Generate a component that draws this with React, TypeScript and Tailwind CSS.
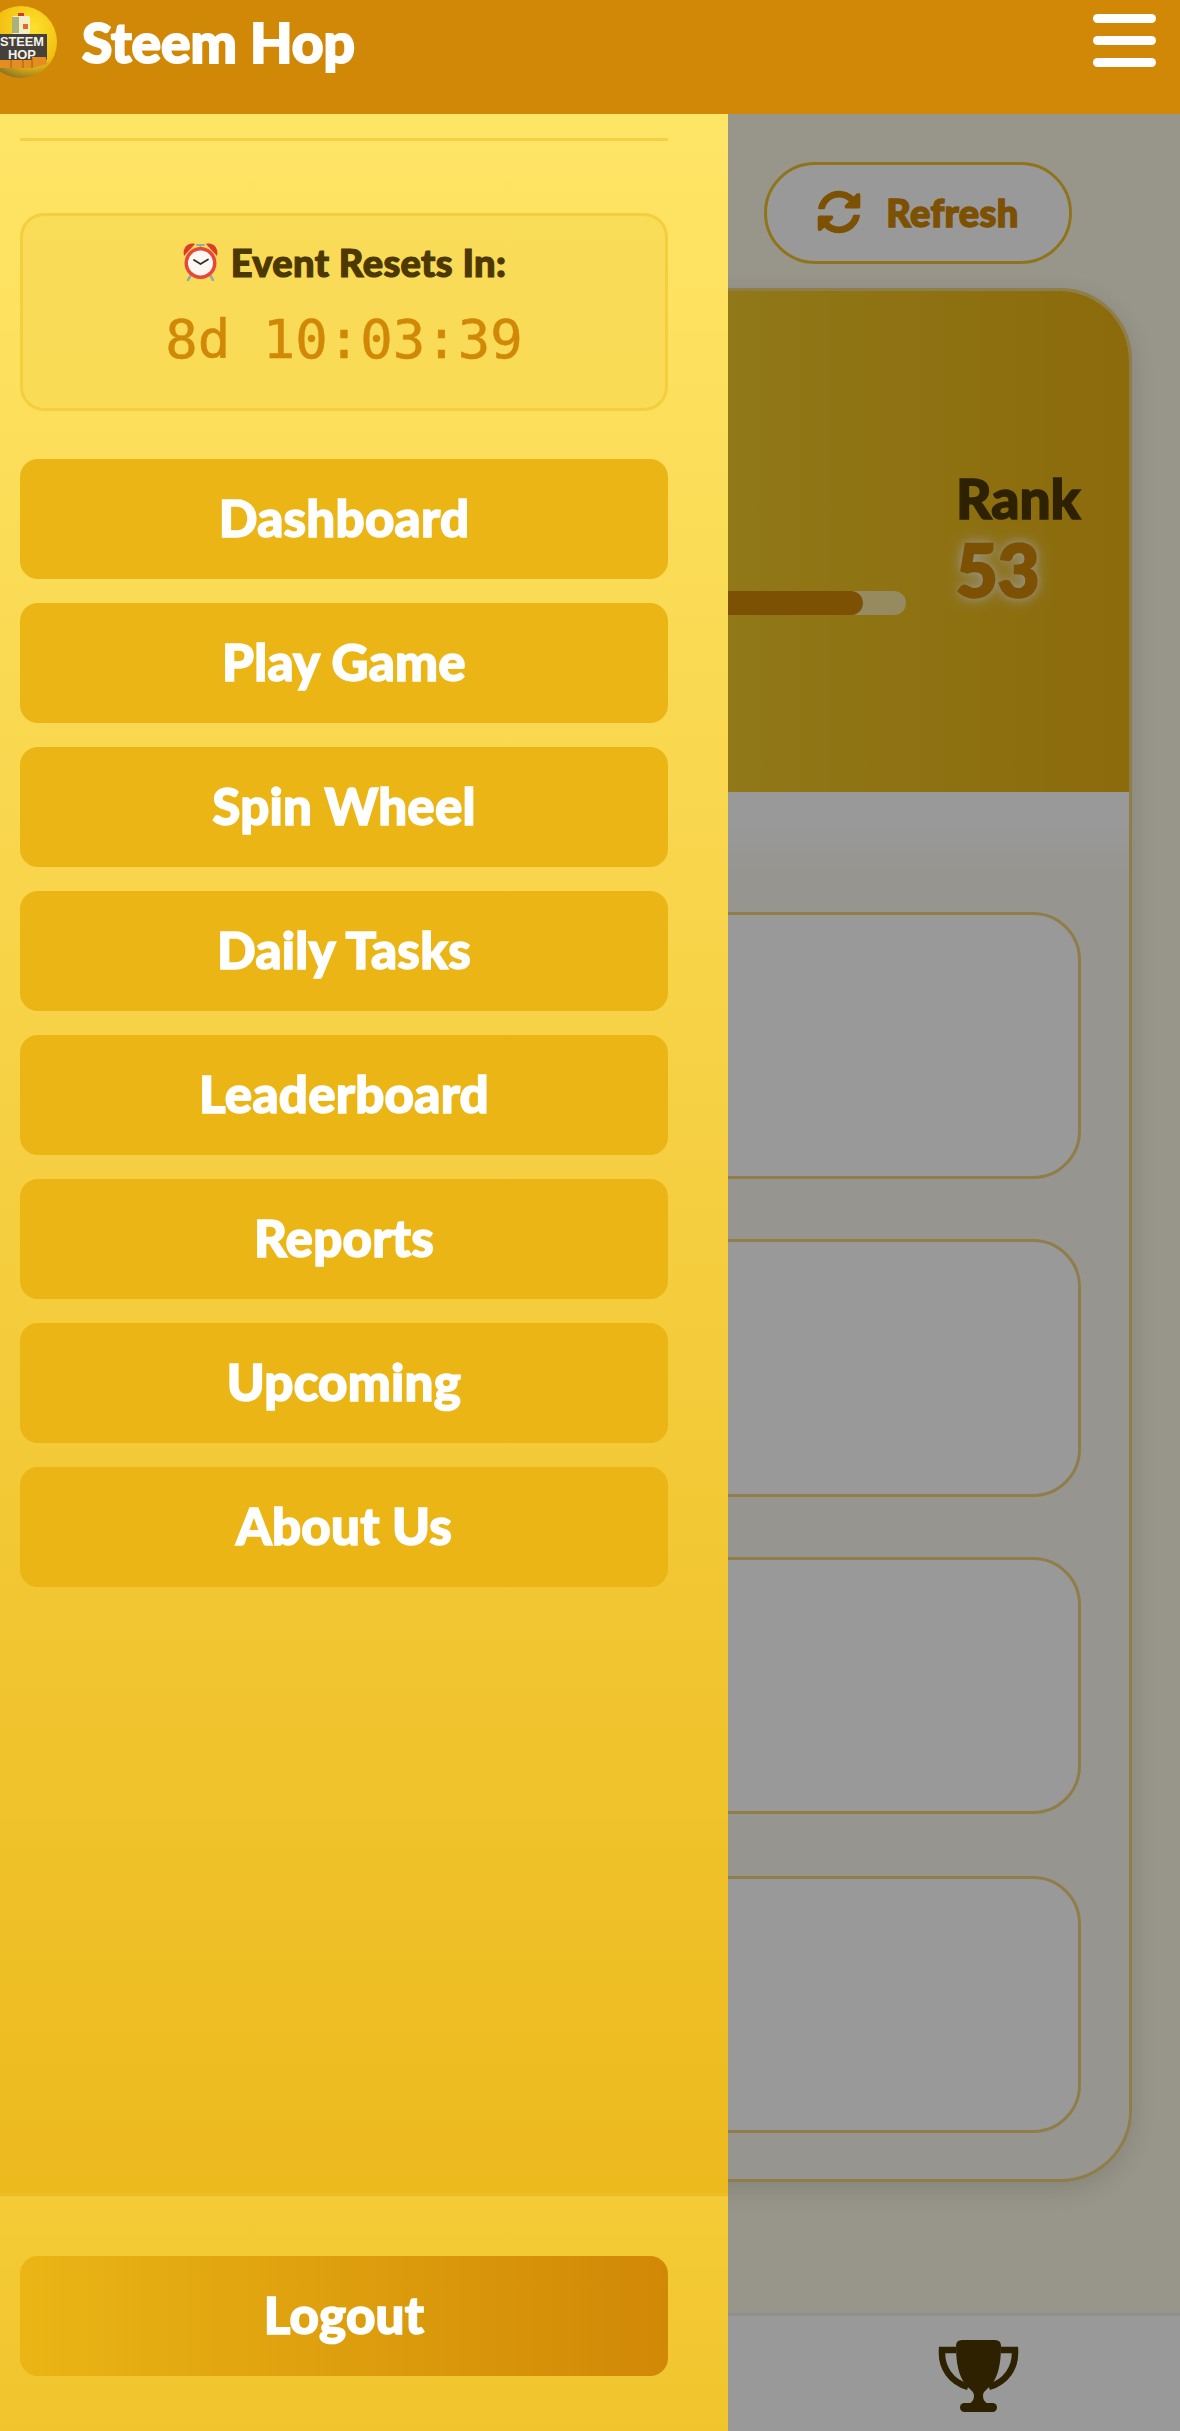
import React from "react";
import { FaSyncAlt } from "react-icons/fa";

const menuItems = [
  "Dashboard",
  "Play Game",
  "Spin Wheel",
  "Daily Tasks",
  "Leaderboard",
  "Reports",
  "Upcoming",
  "About Us",
];

const taskCards = [
  "h-[267px]",
  "h-[258px] mt-[60px]",
  "h-[257px] mt-[60px]",
  "h-[257px] mt-[62px]",
];

const Logo = () => (
  <svg width="72" height="72" viewBox="0 0 72 72" className="-ml-[15px] shrink-0">
    <defs>
      <radialGradient id="ball" cx="0.65" cy="0.3" r="0.85">
        <stop offset="0" stopColor="#ffe02e" />
        <stop offset="0.6" stopColor="#f0bd10" />
        <stop offset="1" stopColor="#5f5230" />
      </radialGradient>
    </defs>
    <circle cx="36" cy="36" r="36" fill="url(#ball)" />
    {/* chicken */}
    <rect x="33" y="7" width="6" height="4" fill="#c8402a" />
    <rect x="27" y="10" width="18" height="18" rx="2" fill="#f4edc6" />
    <rect x="27" y="11" width="7" height="16" fill="#a9b27a" />
    <rect x="38" y="18" width="5" height="5" fill="#d8702a" />
    {/* sign */}
    <rect x="15" y="28" width="47" height="26" fill="#44403a" />
    <text x="37" y="40" textAnchor="middle" textLength="44" lengthAdjust="spacingAndGlyphs" fontFamily="Liberation Sans, sans-serif" fontWeight="700" fontSize="12" fill="#f4f1e8">STEEM</text>
    <text x="37" y="53" textAnchor="middle" textLength="28" lengthAdjust="spacingAndGlyphs" fontFamily="Liberation Sans, sans-serif" fontWeight="700" fontSize="12" fill="#f4f1e8">HOP</text>
    {/* bricks */}
    <path d="M15 54 H47 V51 H61 L62 58 L47 62 H15 Z" fill="#e48d20" />
    <path d="M26 54 V62 M38 54 V62 M47 52 V62" stroke="#a85c10" strokeWidth="1" />
  </svg>
);

const AlarmClock = () => (
  <svg width="37" height="40" viewBox="0 0 37 40" className="shrink-0">
    <path d="M2 14 C0 6 6 0 13 2 Z" fill="#dd3a2a" />
    <path d="M35 14 C37 6 31 0 24 2 Z" fill="#dd3a2a" />
    <path d="M18.5 3 V7 M15 3 H22" stroke="#8fb0a8" strokeWidth="2" strokeLinecap="round" />
    <path d="M9 33 L6 38 M28 33 L31 38" stroke="#8fb0a8" strokeWidth="2.5" strokeLinecap="round" />
    <circle cx="18.5" cy="21" r="16" fill="#e9463a" />
    <circle cx="18.5" cy="21" r="12.5" fill="#fbf8f4" />
    <path d="M18.5 22 L12 18 M18.5 22 L26 17.5" stroke="#3a2a28" strokeWidth="1.8" strokeLinecap="round" />
  </svg>
);

const Trophy = () => (
  <svg width="81" height="72" viewBox="0 0 81 72" className="shrink-0">
    <path d="M18 10 H4 C3 28 13 42 30 47" fill="none" stroke="#4d3800" strokeWidth="6.5" />
    <path d="M63 10 H77 C78 28 68 42 51 47" fill="none" stroke="#4d3800" strokeWidth="6.5" />
    <path d="M24 0 H57 Q63 0 63 6 C63 24 60 36 54 44 C49 50 45 51 45 56 C45 60 47 62 50 64 H31 C34 62 36 60 36 56 C36 51 32 50 27 44 C21 36 18 24 18 6 Q18 0 24 0 Z" fill="#4d3800" />
    <rect x="22" y="63" width="37" height="9" rx="4.5" fill="#4d3800" />
  </svg>
);

export default function App() {
  return (
    <div className="relative flex h-[2431px] w-[1180px] flex-col overflow-hidden bg-[#fefae6] font-['Lato',sans-serif]">
      <header className="relative z-30 flex h-[114px] shrink-0 items-start justify-between bg-[#d18806] pt-[6px]">
        <div className="flex items-center gap-[25px]">
          <Logo />
          <h1 className="text-[55px] leading-[72px] font-black text-white [-webkit-text-stroke-width:2px]">Steem Hop</h1>
        </div>
        <div className="mt-[8px] mr-[24px] flex w-[63px] flex-col gap-[13px]">
          <span className="h-[9px] rounded-full bg-white" />
          <span className="h-[9px] rounded-full bg-white" />
          <span className="h-[9px] rounded-full bg-white" />
        </div>
      </header>

      <main className="flex-1 pt-[48px]">
        <div className="flex justify-end pr-[108px]">
          <button className="flex h-[102px] w-[308px] items-center justify-center gap-[25px] rounded-full border-[3px] border-[#eec22e] bg-white pb-[2px] text-[38px] font-black tracking-[0.01em] text-[#d18806] [-webkit-text-stroke-width:1.5px]">
            <FaSyncAlt className="h-[44px] w-[44px]" />
            Refresh
          </button>
        </div>

        <section className="mx-[48px] mt-[24px] h-[1894px] overflow-hidden rounded-[72px] border-[3px] border-[#eed27a] bg-[#faf8f0] shadow-[0_8px_30px_rgba(0,0,0,0.12)]">
          <div className="flex h-[501px] items-start justify-end bg-[linear-gradient(90deg,#f2c828_63%,#e8b214_100%)] pt-[176px] pr-[49px]">
            <div className="mt-[124px] mr-[50px] h-[24px] w-[300px] overflow-hidden rounded-full bg-[#fbe6a0]">
              <div className="h-full w-[257px] rounded-full bg-[#d18806]" />
            </div>
            <div className="flex w-[124px] flex-col">
              <span className="text-[55px] leading-[62px] font-black text-[#4d3800] [-webkit-text-stroke-width:1.5px]">Rank</span>
              <span className="mt-[2px] text-[72px] leading-[76px] font-black text-[#d18806] [-webkit-text-stroke-width:2.5px] [text-shadow:0_0_10px_#ffffff,0_0_18px_rgba(255,255,255,0.8)]">53</span>
            </div>
          </div>
          <div className="bg-[linear-gradient(180deg,#ffffff_30px,#faf8f0_90px)] px-[48px] pt-[120px]">
            {taskCards.map((size, index) => (
              <div key={index} className={`${size} rounded-[48px] border-[3px] border-[#eed27a] bg-white`} />
            ))}
          </div>
        </section>
      </main>

      <nav className="flex h-[118px] shrink-0 items-start justify-end border-t-[3px] border-[#eeeeee] bg-white pt-[24px] pr-[161px]">
        <Trophy />
      </nav>

      <div className="absolute inset-x-0 top-[114px] bottom-0 z-10 bg-black/40" />

      <aside className="absolute top-[114px] bottom-0 left-0 z-20 flex w-[728px] flex-col bg-[linear-gradient(180deg,#ffe566_0%,#eab515_100%)]">
        <div className="flex-1 pt-[24px] pr-[60px] pl-[20px]">
          <div className="h-[3px] bg-[#f5d042]" />
          <div className="mt-[72px] flex h-[198px] flex-col items-center rounded-[24px] border-[3px] border-[#f3cf3f] bg-[#f8da55]/80 pt-[24px]">
            <div className="flex items-center gap-[12px] text-[38px] leading-[44px] font-black tracking-[0.01em] text-[#4d3800] [-webkit-text-stroke-width:1.2px]">
              <AlarmClock />
              Event Resets In:
            </div>
            <div className="mt-[24px] font-['DejaVu_Sans_Mono',monospace] text-[54px] leading-[64px] text-[#d18806] [-webkit-text-stroke-width:0.5px]">8d 10:03:39</div>
          </div>
          <div className="mt-[48px] flex flex-col gap-[24px]">
            {menuItems.map((item) => (
              <button key={item} className="h-[120px] rounded-[18px] bg-[#eab515] pb-[2px] text-[51px] font-black tracking-[0.005em] text-white [-webkit-text-stroke-width:1.5px]">
                {item}
              </button>
            ))}
          </div>
        </div>
        <div className="h-[238px] shrink-0 border-t-[3px] border-[#ecbd22] bg-[linear-gradient(180deg,#f4cb36,#f1c42d)] pt-[60px] pr-[60px] pl-[20px]">
          <button className="h-[120px] w-full rounded-[18px] bg-[linear-gradient(90deg,#eab515,#d18806)] pb-[2px] text-[51px] font-black tracking-[0.005em] text-white [-webkit-text-stroke-width:1.5px]">
            Logout
          </button>
        </div>
      </aside>
    </div>
  );
}
